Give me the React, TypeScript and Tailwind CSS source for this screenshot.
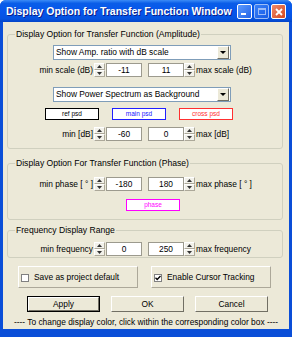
import React from "react";

function Spinner() {
  return (
    <div className="flex flex-col w-[11px] h-[14px]">
      <div className="flex-1 flex items-center justify-center bg-[#F2F1EA] border border-t-white border-l-white border-r-[#ACA899] border-b-[#ACA899]">
        <svg width="5" height="3" viewBox="0 0 5 3"><path d="M2.5 0L5 3H0z" fill="#333" /></svg>
      </div>
      <div className="flex-1 flex items-center justify-center bg-[#F2F1EA] border border-t-white border-l-white border-r-[#ACA899] border-b-[#ACA899]">
        <svg width="5" height="3" viewBox="0 0 5 3"><path d="M0 0H5L2.5 3z" fill="#333" /></svg>
      </div>
    </div>
  );
}

function NumBox({ value }: { value: string }) {
  return (
    <div className="w-[36px] h-[14px] bg-white border border-[#9C9A8E] flex items-center justify-center text-[8.4px] leading-none text-black">
      {value}
    </div>
  );
}

function RangeRow({ left, right, min, max }: { left: string; right: string; min: string; max: string }) {
  return (
    <div className="flex items-center h-[14px]">
      <div className="w-[86px] text-right text-[8.4px] leading-none pr-[1px] whitespace-nowrap">{left}</div>
      <Spinner />
      <div className="ml-[1px]">
        <NumBox value={min} />
      </div>
      <div className="ml-[6px]">
        <NumBox value={max} />
      </div>
      <Spinner />
      <div className="text-[8.4px] leading-none ml-[1px] whitespace-nowrap">{right}</div>
    </div>
  );
}

function Select({ label }: { label: string }) {
  return (
    <div className="ml-[45px] w-[178px] h-[15px] bg-white border border-[#7F9DB9] flex items-center">
      <div className="flex-1 pl-[2px] text-[8.4px] leading-none">{label}</div>
      <div className="w-[12px] h-[13px] mr-[1px] bg-[#ECE9D8] border border-t-white border-l-white border-r-[#716F64] border-b-[#716F64] flex items-center justify-center">
        <svg width="6" height="3" viewBox="0 0 6 3"><path d="M0 0H6L3 3z" fill="#000" /></svg>
      </div>
    </div>
  );
}

function ColorBox({ label, color }: { label: string; color: string }) {
  return (
    <div
      className="w-[54px] h-[12px] bg-white border flex items-center justify-center text-[6.5px] leading-none"
      style={{ borderColor: color, color }}
    >
      {label}
    </div>
  );
}

function Group({ title, children, cls }: { title: string; children: React.ReactNode; cls: string }) {
  return (
    <fieldset className={`ml-[4px] w-[276px] border border-[#D0D0BF] rounded-[3px] ${cls}`}>
      <legend className="ml-[7px] px-[1px] text-[8.6px] leading-[10px]">{title}</legend>
      {children}
    </fieldset>
  );
}

function Btn({ label, def }: { label: string; def?: boolean }) {
  return (
    <div className={`w-[73px] h-[16px] ${def ? "border border-black" : ""}`}>
      <div className="w-full h-full bg-[#ECE9D8] border border-t-white border-l-white border-r-[#716F64] border-b-[#716F64] flex items-center justify-center text-[8.4px] leading-none">
        {label}
      </div>
    </div>
  );
}

function CheckPanel({ label, checked, w }: { label: string; checked?: boolean; w: string }) {
  return (
    <div className={`${w} h-[22px] border border-t-white border-l-white border-r-[#ACA899] border-b-[#ACA899] flex items-center pl-[2px]`}>
      <div className="w-[8px] h-[8px] bg-white border border-[#808080] flex items-center justify-center mt-[1px]">
        {checked && (
          <svg width="6" height="6" viewBox="0 0 6 6"><path d="M0.5 2.8L2.2 4.5L5.5 1" stroke="#000" strokeWidth="1.3" fill="none" /></svg>
        )}
      </div>
      <div className="ml-[5px] text-[8.4px] leading-none">{label}</div>
    </div>
  );
}

export default function App() {
  return (
    <div className="w-[292px] h-[337px] bg-white font-['Liberation_Sans',Arial,sans-serif] text-black">
      <div className="w-full h-full flex flex-col bg-[#0A4ED8] rounded-t-[6px] overflow-hidden">
        {/* title bar */}
        <div className="h-[22px] flex items-center bg-[linear-gradient(180deg,#3C8CF6_0%,#0A5DE8_15%,#0656EC_55%,#0553E0_85%,#0444C8_100%)]">
          <div className="pl-[6px] flex-1 text-white font-bold text-[10.5px] leading-none [text-shadow:1px_1px_0_#0A1E8A]">
            Display Option for Transfer Function Window
          </div>
          <div className="flex gap-[2px] pr-[6px] mt-[1px]">
            <div className="w-[15px] h-[15px] rounded-[2px] border border-white bg-[linear-gradient(135deg,#5C9BFF,#2463E6)] flex items-end pl-[3px] pb-[3px]">
              <div className="w-[5px] h-[2px] bg-white" />
            </div>
            <div className="w-[15px] h-[15px] rounded-[2px] border border-white bg-[linear-gradient(135deg,#5C9BFF,#2463E6)] flex items-center justify-center opacity-60">
              <div className="w-[8px] h-[7px] border border-white border-t-2" />
            </div>
            <div className="w-[15px] h-[15px] rounded-[2px] border border-white bg-[linear-gradient(135deg,#F08A6A,#D3481F)] flex items-center justify-center">
              <svg width="8" height="8" viewBox="0 0 8 8"><path d="M1 1L7 7M7 1L1 7" stroke="#fff" strokeWidth="1.8" /></svg>
            </div>
          </div>
        </div>
        {/* body */}
        <div className="flex-1 mx-[3px] mb-[8px] bg-[#ECE9D8] flex flex-col">
          <Group title="Display Option for Transfer Function (Amplitude)" cls="mt-[7px] pb-[7px]">
            <div className="mt-[6px]"><Select label="Show Amp. ratio with dB scale" /></div>
            <div className="mt-[3px]"><RangeRow left="min scale (dB)" right="max scale (dB)" min="-11" max="11" /></div>
            <div className="mt-[10px]"><Select label="Show Power Spectrum as Background" /></div>
            <div className="mt-[6px] ml-[37px] flex gap-[13px]">
              <ColorBox label="ref psd" color="#000000" />
              <ColorBox label="main psd" color="#2020FF" />
              <ColorBox label="cross psd" color="#FF3030" />
            </div>
            <div className="mt-[7px]"><RangeRow left="min [dB]" right="max [dB]" min="-60" max="0" /></div>
          </Group>
          <Group title="Display Option For Transfer Function (Phase)" cls="mt-[9px] pb-[8px]">
            <div className="mt-[9px]"><RangeRow left="min phase [ ° ]" right="max phase [ ° ]" min="-180" max="180" /></div>
            <div className="mt-[8px] ml-[118px]"><ColorBox label="phase" color="#FF00FF" /></div>
          </Group>
          <Group title="Frequency Display Range" cls="mt-[5px] pb-[1px]">
            <div className="mt-[7px]"><RangeRow left="min frequency" right="max frequency" min="0" max="250" /></div>
          </Group>
          <div className="mt-[8px] flex ml-[15px] gap-[13px]">
            <CheckPanel label="Save as project default" w="w-[120px]" />
            <CheckPanel label="Enable Cursor Tracking" checked w="w-[120px]" />
          </div>
          <div className="mt-[8px] flex ml-[24px] gap-[11px]">
            <Btn label="Apply" def />
            <Btn label="OK" />
            <Btn label="Cancel" />
          </div>
          <div className="mt-[6px] text-center text-[8.4px] leading-none whitespace-nowrap">
            ---- To change display color, click within the corresponding color box ----
          </div>
        </div>
      </div>
    </div>
  );
}
